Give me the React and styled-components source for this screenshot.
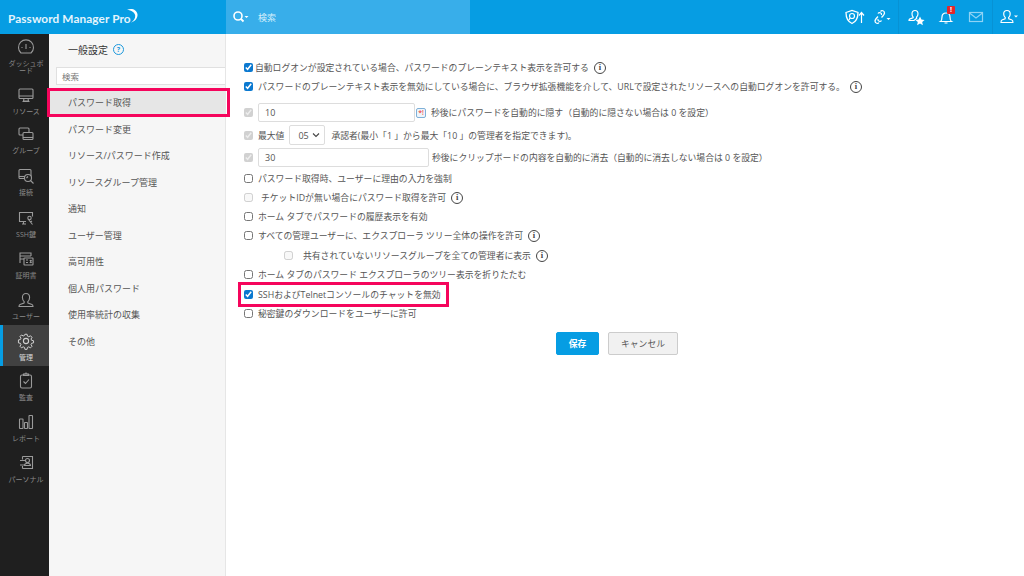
import React from "react";
import styled, { createGlobalStyle } from "styled-components";

const Global = createGlobalStyle`
  html, body { margin: 0; padding: 0; height: 100%; background: #fff; }
  body { font-family: "Open Sans", "Noto Sans CJK JP", sans-serif; color: #444; overflow: hidden; }
  * { box-sizing: border-box; }
`;

const Page = styled.div`
  width: 1024px; height: 576px; display: flex; flex-direction: column; overflow: hidden;
`;
const TopBar = styled.header`
  height: 34px; flex: none; display: flex; align-items: stretch; background: #069de3; color: #fff;
`;
const Brand = styled.div`
  width: 226px; display: flex; align-items: center; padding: 3px 0 0 8px;
  font-family: Lato, sans-serif; font-size: 11.8px; font-weight: 700; letter-spacing: .1px; color: #e4f4fc;
`;
const BrandArc = styled.svg`
  width: 13px; height: 15px; margin: -6px 0 0 -6px; overflow: visible;
`;
const GlobalSearch = styled.div`
  width: 244px; background: #38aeea; display: flex; align-items: center; padding-left: 6px; gap: 8px;
  font-size: 9px; color: #d5eefb;
`;
const Spacer = styled.div` flex: 1; `;
const TopIcon = styled.div`
  width: ${p => p.$w || 30}px; display: flex; align-items: center; justify-content: ${p => p.$end ? "flex-end" : "center"}; position: relative;
  border-right: ${p => (p.$divider ? "1px solid #0792d4" : "none")};
`;
const Badge = styled.span`
  position: absolute; top: 6px; right: 5px; width: 8px; height: 8px; background: #e3262b; border-radius: 1px;
  color: #fff; font-size: 7px; line-height: 8px; text-align: center; font-weight: 700;
`;
const Body = styled.div` flex: 1; display: flex; min-height: 0; `;

const Rail = styled.nav`
  width: 49px; flex: none; background: #1f1f1f; display: flex; flex-direction: column;
`;
const RailItem = styled.div`
  height: ${p => p.$h || 40.7}px; display: flex; flex-direction: column; align-items: center; justify-content: flex-start;
  padding: ${p => p.$pad ?? 5}px 0 0 3px;
  background: ${p => (p.$active ? "#414141" : "transparent")};
  box-shadow: ${p => (p.$active ? "inset 3px 0 0 #069de3" : "none")};
  color: ${p => (p.$active ? "#d8d8d8" : "#8a8a8a")};
  font-size: 7px; line-height: 6.5px; text-align: center; gap: 5px;
`;
const RailLabel = styled.span`
  max-width: 38px;
`;
const RailGlyph = styled.svg`
  width: 18px; height: 18px; flex: none; fill: none; stroke: ${p => (p.$active ? "#d0d0d0" : "#9a9a9a")}; stroke-width: 1.1;
`;

const Side = styled.aside`
  width: 177px; flex: none; background: #f6f6f6; border-right: 1px solid #e6e6e6; display: flex; flex-direction: column; position: relative; z-index: 1;
`;
const SideHead = styled.div`
  height: 28px; flex: none; display: flex; align-items: center; gap: 5px; padding: 2px 0 0 19px; font-size: 10px; color: #333;
`;
const SideSearch = styled.div`
  height: 18px; margin: 5px 0 0 7px; background: #fff; border: 1px solid #e0e0e0; border-right: none; padding-left: 5px;
  display: flex; align-items: center; font-size: 8.5px; color: #777;
`;
const Menu = styled.ul`
  list-style: none; margin: 4.5px 0 0; padding: 0;
`;
const MenuItem = styled.li`
  height: 26.5px; display: flex; align-items: center; padding-left: 19px; font-size: 9px; color: #555; position: relative;
  background: ${p => (p.$active ? "#e6e6e6" : "transparent")};
  ${p => p.$marked && `&::after { content: ""; position: absolute; left: -2px; right: -5px; top: -2px; bottom: -1px; border: 3px solid #f5055c; }`}
`;

const Main = styled.main`
  flex: 1; padding: 24px 0 0 18px; background: #fff; display: flex; flex-direction: column; align-items: flex-start;
`;
const Row = styled.label`
  height: ${p => p.$h || 19}px; margin-top: ${p => p.$mt || 0}px; margin-left: ${p => p.$ml || 0}px;
  display: flex; align-items: center; position: relative; font-size: 8.82px; color: #555; white-space: nowrap; padding-right: 4px;
  ${p => p.$marked && `&::after { content: ""; position: absolute; left: -6px; right: -4px; top: -3px; bottom: -3px; border: 3px solid #f5055c; pointer-events: none; }`}
`;
const Check = styled.input.attrs({ type: "checkbox", readOnly: true })`
  width: 9px; height: 9px; margin: 0 ${p => p.$gap ?? 5}px 0 0; flex: none; accent-color: #0b79d0;
`;
const Field = styled.div`
  width: ${p => p.$w}px; height: 19px; border: 1px solid #ddd; border-radius: 2px; padding-left: 6px; margin-right: ${p => p.$mr ?? 3}px;
  display: flex; align-items: center; font-size: 9px; color: #555;
`;
const Picker = styled.div`
  width: 36px; height: 20px; border: 1px solid #ddd; border-radius: 2px; margin: 0 6px 0 5px; padding: 0 4px 0 8px;
  display: flex; align-items: center; justify-content: space-between; font-size: 9px; color: #555;
`;
const InfoMark = styled.span`
  width: 12px; height: 12px; border: 1px solid #444; border-radius: 50%; margin-left: 5px; display: inline-flex; align-items: center; justify-content: center;
  font-family: "Liberation Serif", serif; font-size: 8.5px; font-weight: 700; color: #444; line-height: 1;
`;
const HelpMark = styled.span`
  width: 11px; height: 11px; border: 1px solid #1c98dc; border-radius: 50%; display: inline-flex; align-items: center; justify-content: center;
  font-size: 7px; font-weight: 700; color: #1c98dc; line-height: 1;
`;
const KeyTile = styled.span`
  width: 10px; height: 10px; border: 1px solid #7fb0d8; border-radius: 2px; background: #eef5fb; margin: 0 5px 0 1px; color: #e22; font-size: 7px; line-height: 8px; text-align: center; flex: none;
`;
const Actions = styled.div`
  display: flex; gap: 9px; margin: 9px 0 0 312px;
`;
const Btn = styled.button`
  height: 23px; width: ${p => p.$w}px; padding: 0; border-radius: 2px; font-family: inherit; font-size: 8.8px;
  border: 1px solid ${p => (p.$primary ? "#069de3" : "#ccc")};
  background: ${p => (p.$primary ? "#069de3" : "#f1f1f1")};
  color: ${p => (p.$primary ? "#fff" : "#555")};
  font-weight: ${p => (p.$primary ? 600 : 400)};
`;
const TopGlyph = styled.svg`
  width: ${p => p.$w || 18}px; height: 18px; flex: none; fill: none; stroke: ${p => p.$c || "#fff"}; stroke-width: 1.2;
`;

const glyphs = {
  dash: <><path d="M4 15a7.500 7.500 0 1 1 10 0z" /><path d="M9 6v5M4.500 9.500h1M12.500 9.500h1M9 13h.1" /></>,
  res: <><rect x="2" y="3" width="14" height="9.500" rx="1" /><path d="M2 10h14M7 12.500l-.5 2.500h5L11 12.500M5.500 15.500h7" /></>,
  group: <><rect x="2" y="3" width="10" height="7" rx="1" /><rect x="6" y="7.500" width="10" height="7" rx="1" fill="#1f1f1f" /><path d="M6 12.500H16" /></>,
  connect: <><rect x="2" y="2.500" width="12" height="9" rx="1" /><path d="M2 9.500h12" /><circle cx="11" cy="11" r="3.500" fill="#1f1f1f" /><path d="M13.500 13.500l3 3M9.500 11l1.500-1.500" /></>,
  ssh: <><path d="M9 12.500H2.500v-9h13v4M5 15h4M6.500 12.500V15" /><circle cx="12.500" cy="9" r="1.700" /><path d="M11.500 10.500L15.500 15.500M13.500 13l1.500-1" /></>,
  cert: <><path d="M3 13V3h11v3M3 6h11M3 9h4" /><rect x="7" y="8" width="9" height="7" rx=".5" /><path d="M9 10h2M9 12.500h2M13 10l1.500 3M14.500 10L13 13" /></>,
  user: <><path d="M9 2.500c2.300 0 3.600 1.800 3.600 4 0 2-1 3.400-1.900 4.300l.3 1.300 4 1.500c.7.300 1 .8 1 1.900H2c0-1.100.3-1.600 1-1.900l4-1.500.3-1.300c-.9-.9-1.900-2.300-1.900-4.300 0-2.200 1.300-4 3.600-4z" /></>,
  gear: <><circle cx="9" cy="9" r="2.600" /><path d="M7.800 1.500h2.400l.4 2.100 1.500.7 1.900-1.100 1.700 1.700-1.100 1.900.7 1.500 2.100.4v2.400l-2.100.4-.7 1.500 1.100 1.900-1.700 1.700-1.900-1.100-1.500.7-.4 2.100H7.800l-.4-2.100-1.500-.7-1.900 1.100-1.700-1.700 1.100-1.900-.7-1.500-2.100-.4V7.800l2.100-.4.7-1.500-1.100-1.900 1.700-1.700 1.900 1.100 1.500-.7z" transform="translate(.9 .9) scale(.9)" /></>,
  audit: <><rect x="3.500" y="3" width="11" height="13" rx="1.500" /><path d="M6.500 3.500V2h1.500a1 1 0 0 1 2 0h1.500v1.500zM6.500 9.500l2 2 3.500-4" /></>,
  report: <><rect x="2.500" y="6" width="3.500" height="9.500" rx=".5" /><rect x="7.500" y="9.500" width="3" height="6" rx=".5" /><rect x="12" y="2.500" width="3.500" height="13" rx=".5" /></>,
  personal: <><path d="M5.500 2.500h10v12h-10M5.500 2.500v3M5.500 12v2.500M3 6.500h5M3 11h5" /><circle cx="10.500" cy="6.500" r="2" /><path d="M7.500 11.500c0-3 6-3 6 0z" /></>,
};

const railItems = [
  ["dash", "ダッシュボード", 46, 4],
  ["res", "リソース", 40, 6],
  ["group", "グループ", 41, 5],
  ["connect", "接続", 41, 6],
  ["ssh", "SSH鍵", 41, 7],
  ["cert", "証明書", 41, 7],
  ["user", "ユーザー", 41, 7],
  ["gear", "管理", 41, 7, true],
  ["audit", "監査", 41, 6],
  ["report", "レポート", 41, 6],
  ["personal", "パーソナル", 41, 6],
];

const menu = ["パスワード取得", "パスワード変更", "リソース/パスワード作成", "リソースグループ管理", "通知", "ユーザー管理", "高可用性", "個人用パスワード", "使用率統計の収集", "その他"];

const Info = () => <InfoMark>i</InfoMark>;

export default function App() {
  return (
    <Page>
      <Global />
      <TopBar>
        <Brand>
          Password Manager Pro
          <BrandArc viewBox="0 0 13 15"><path d="M2 2c4-2.500 10-.5 10.500 4.500.3 3.500-2.500 7-6.500 8 2.500-1.500 4.500-4 4.200-7C9.900 4.500 6.500 2 2 2z" fill="#fff" /></BrandArc>
        </Brand>
        <GlobalSearch>
          <TopGlyph $w={18} viewBox="0 0 18 18"><circle cx="6" cy="8" r="4" strokeWidth="1.600" /><path d="M9 11l2.500 2.500" strokeWidth="1.800" /><path d="M12.500 8h4l-2 2z" fill="#fff" stroke="none" /></TopGlyph>
          検索
        </GlobalSearch>
        <Spacer />
        <TopIcon $w={34} $end>
          <TopGlyph $w={22} viewBox="-1 0 22 18"><path d="M2 4.500l6-2 6 2c0 5-1.500 9-6 11-4.500-2-6-6-6-11z" strokeWidth="1.300" /><circle cx="8" cy="8" r="2.500" /><path d="M6 10l-1 2M17.500 15V5M15 7.500l2.500-3 2.500 3" /></TopGlyph>
        </TopIcon>
        <TopIcon $w={34} $divider>
          <TopGlyph $w={22} viewBox="0 0 22 18"><path d="M9.500 3.500c1-1.500 4-1 4 1.500 0 1-2 3.500-3 4.500M8 14.500c-1 1.500-4 1-4-1.500 0-1 2-3.500 3-4.500M7 5.500c1-1.500 4-1 3.500 1.500M10.500 12.500c-1 1.500-4 1-3.500-1.500" strokeWidth="1.300" /><path d="M15.500 10h4l-2 2z" fill="#fff" stroke="none" /></TopGlyph>
        </TopIcon>
        <TopIcon $w={33}>
          <TopGlyph viewBox="0 0 18 18"><path d="M8 2.500c2 0 3 1.500 3 3.200 0 1.600-.8 2.800-1.500 3.500l.2 1L7 12.500H2c0-1 .3-1.300 1-1.600l3-1.200.2-.6C5.500 8.500 5 7.300 5 5.700 5 4 6 2.500 8 2.500z" /><path d="M13 8.500l1.400 3 3.200.4-2.400 2.200.7 3.200-2.900-1.700-2.900 1.700.7-3.200L8.400 11.900l3.200-.4z" fill="#fff" stroke="none" /></TopGlyph>
        </TopIcon>
        <TopIcon $w={28}>
          <TopGlyph viewBox="0 0 18 18"><path d="M3.500 13.500c1.500-1 1.500-2.500 1.500-4.500 0-2.500 1.500-4 4-4s4 1.500 4 4c0 2 0 3.500 1.500 4.500zM7.500 15h3" /></TopGlyph>
          <Badge>!</Badge>
        </TopIcon>
        <TopIcon $w={33} $divider>
          <TopGlyph $c="#8fd3f5" viewBox="0 0 18 18"><rect x="2.500" y="4.500" width="13" height="9" /><path d="M2.500 5l6.500 5 6.500-5" /></TopGlyph>
        </TopIcon>
        <TopIcon $w={31}>
          <TopGlyph $w={20} viewBox="0 0 20 18"><path d="M8 2.500c2 0 3.200 1.500 3.200 3.400 0 1.700-.8 3-1.600 3.700l.2 1.100 3.200 1.300c.6.200.9.800.9 2.500H2c0-1.700.3-2.300.9-2.500l3.200-1.300.2-1.100c-.8-.7-1.600-2-1.600-3.700 0-1.900 1.300-3.400 3.300-3.400z" /><path d="M15 7.500h4l-2 2z" fill="#fff" stroke="none" /></TopGlyph>
        </TopIcon>
      </TopBar>
      <Body>
        <Rail>
          {railItems.map(([g, label, h, pad, active]) => (
            <RailItem key={label} $h={h} $pad={pad} $active={active}>
              <RailGlyph $active={active} viewBox="0 0 18 18">{glyphs[g]}</RailGlyph>
              <RailLabel>{label}</RailLabel>
            </RailItem>
          ))}
        </Rail>
        <Side>
          <SideHead>一般設定 <HelpMark>?</HelpMark></SideHead>
          <SideSearch>検索</SideSearch>
          <Menu>
            {menu.map((m, i) => (
              <MenuItem key={m} $active={i === 0} $marked={i === 0}>{m}</MenuItem>
            ))}
          </Menu>
        </Side>
        <Main>
          <Row>
            <Check defaultChecked $gap={2} />
            自動ログオンが設定されている場合、パスワードのプレーンテキスト表示を許可する<Info />
          </Row>
          <Row>
            <Check defaultChecked />
            パスワードのプレーンテキスト表示を無効にしている場合に、ブラウザ拡張機能を介して、URLで設定されたリソースへの自動ログオンを許可する。<Info />
          </Row>
          <Row $mt={7}>
            <Check defaultChecked disabled />
            <Field $w={157} $mr={0}>10</Field><KeyTile>*!</KeyTile>
            秒後にパスワードを自動的に隠す（自動的に隠さない場合は 0 を設定）
          </Row>
          <Row $mt={3} $h={20}>
            <Check defaultChecked disabled />
            最大値
            <Picker>05
              <svg width="8" height="6" viewBox="0 0 8 6" fill="none" stroke="#444" strokeWidth="1.100"><path d="M1 1.500l3 3 3-3" /></svg>
            </Picker>
            承認者(最小「1 」から最大「10 」の管理者を指定できます)。
          </Row>
          <Row $mt={3}>
            <Check defaultChecked disabled />
            <Field $w={171}>30</Field>
            秒後にクリップボードの内容を自動的に消去（自動的に消去しない場合は 0 を設定）
          </Row>
          <Row $mt={2}><Check />パスワード取得時、ユーザーに理由の入力を強制</Row>
          <Row><Check disabled $gap={8} />チケットIDが無い場合にパスワード取得を許可<Info /></Row>
          <Row><Check />ホーム タブでパスワードの履歴表示を有効</Row>
          <Row><Check />すべての管理ユーザーに、エクスプローラ ツリー全体の操作を許可<Info /></Row>
          <Row $mt={1} $ml={40}><Check disabled $gap={10} />共有されていないリソースグループを全ての管理者に表示<Info /></Row>
          <Row><Check />ホーム タブのパスワード エクスプローラのツリー表示を折りたたむ</Row>
          <Row $mt={1} $marked><Check defaultChecked />SSHおよびTelnetコンソールのチャットを無効</Row>
          <Row><Check />秘密鍵のダウンロードをユーザーに許可</Row>
          <Actions>
            <Btn $primary $w={43}>保存</Btn>
            <Btn $w={70}>キャンセル</Btn>
          </Actions>
        </Main>
      </Body>
    </Page>
  );
}
